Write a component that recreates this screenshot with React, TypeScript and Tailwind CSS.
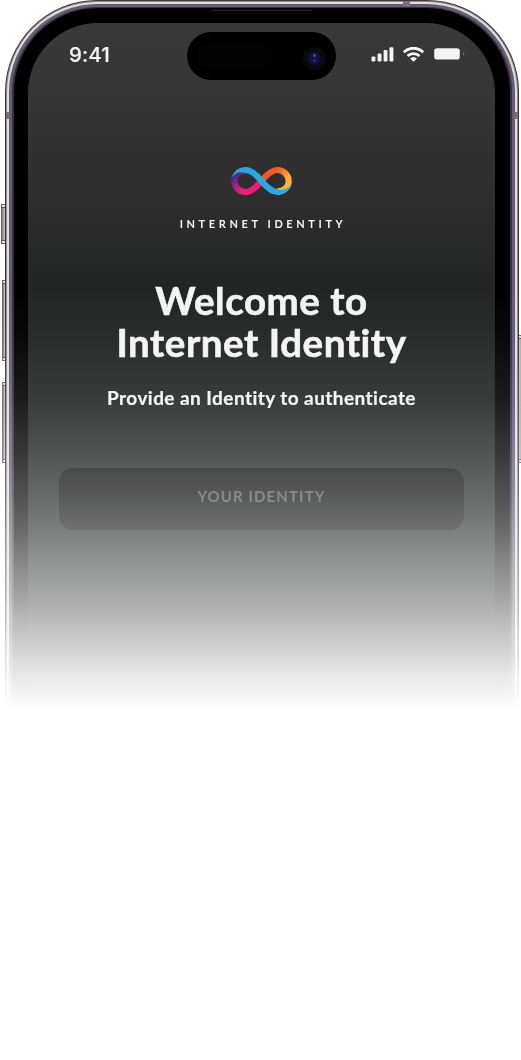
import React from "react";

function InfinityLogo() {
  return (
    <svg width="61" height="30" viewBox="0 0 61 30" fill="none" className="block">
      <defs>
        <linearGradient id="pink" x1="4" y1="6" x2="22" y2="26" gradientUnits="userSpaceOnUse">
          <stop offset="0.1" stopColor="#522785" />
          <stop offset="0.7" stopColor="#ed1e79" />
        </linearGradient>
        <linearGradient id="orange" x1="38" y1="4" x2="57" y2="22" gradientUnits="userSpaceOnUse">
          <stop offset="0.2" stopColor="#f15a24" />
          <stop offset="0.75" stopColor="#fbb03b" />
        </linearGradient>
      </defs>
      <path d="M30.5 15C26 20.5 21 26 14.8 26A11.4 11.2 0 0 1 3.3 14.8C3.3 8.5 8.5 4.6 14.8 4.6" stroke="url(#pink)" strokeWidth="6.2" />
      <path d="M30.5 15C35 9.5 40 4 46.2 4A11.4 11.2 0 0 1 57.7 15.2C57.7 21.5 52.5 25.4 46.2 25.4" stroke="url(#orange)" strokeWidth="6.2" />
      <path d="M14.5 4C21 4 26 9.5 30.5 15C35 20.5 40 26 46.5 26" stroke="#29abe2" strokeWidth="6.2" />
      <path d="M0.8 11.5C2.6 5 8 .9 14.8 .9L14.8 7.1C9.5 5 4.5 6.5 0.8 11.5Z" fill="#29abe2" />
      <path d="M60.2 18.5C58.4 25 53 29.1 46.2 29.1L46.2 22.9C51.5 25 56.5 23.5 60.2 18.5Z" fill="#29abe2" />
    </svg>
  );
}

function StatusIcons() {
  return (
    <svg width="94" height="16" viewBox="0 0 94 16" className="block" fill="#f4f4f4">
      <rect x="0.5" y="9.5" width="3.9" height="5" rx="1" />
      <rect x="6.6" y="6.5" width="3.9" height="8" rx="1" />
      <rect x="12.6" y="2.9" width="3.9" height="11.6" rx="1" />
      <rect x="18.5" y="0.3" width="3.9" height="14.2" rx="1" />
      <g fill="none" stroke="#f4f4f4" strokeWidth="2.9">
        <path d="M32.8 5.3A13.6 13.6 0 0 1 52.2 5.3" />
        <path d="M36.5 9A8.7 8.7 0 0 1 48.5 9" />
      </g>
      <path d="M39.1 11.6A5 5 0 0 1 45.9 11.6L42.5 14.7Z" />
      <rect x="63.2" y="1.2" width="25.6" height="11.3" rx="2.8" />
      <path d="M92.2 5C93.7 5.6 93.7 8.2 92.2 8.8Z" fill="#777" />
    </svg>
  );
}

function SideButton({ className }: { className: string }) {
  return (
    <div className={`absolute flex flex-col justify-between border border-[#67636a] bg-linear-to-r from-[#746e79] via-[#c0bac4] to-[#aaa3b0] ${className}`}>
      <div className="h-[3px] border-b border-[#5b5562] bg-[#e0dedf]" />
      <div className="h-[3px] border-t border-[#5b5562] bg-[#e0dedf]" />
    </div>
  );
}

function DynamicIsland() {
  return (
    <div className="absolute left-[187px] top-[32px] flex h-[48px] w-[149px] items-center justify-between rounded-full bg-black pl-[10px] pr-[10px]">
      <div className="h-[26px] w-[75px] rounded-full bg-[#030303]" />
      <div className="mt-[4px] flex h-[23px] w-[23px] items-center justify-center rounded-full bg-[#0a090d]">
        <div className="flex h-[13px] w-[13px] flex-col items-center justify-center gap-[2px] rounded-full bg-[#10123d]">
          <div className="h-[3px] w-[3px] rounded-full bg-[#424aa2]" />
          <div className="h-[3px] w-[3px] rounded-full bg-[#28309a]" />
        </div>
      </div>
    </div>
  );
}

export default function App() {
  return (
    <main className="h-[1060px] w-full overflow-hidden bg-white">
      <div className="relative h-[712px] w-[521px] overflow-hidden pl-[5px] pr-[2px] [mask-image:linear-gradient(to_bottom,#000_290px,rgba(0,0,0,.96)_340px,rgba(0,0,0,.89)_400px,rgba(0,0,0,.79)_450px,rgba(0,0,0,.67)_500px,rgba(0,0,0,.53)_550px,rgba(0,0,0,.385)_600px,rgba(0,0,0,.2)_650px,rgba(0,0,0,.09)_680px,transparent_711px)]">
        <SideButton className="left-[1px] top-[204px] h-[40px] w-[6px]" />
        <SideButton className="left-[2px] top-[280px] h-[81px] w-[5px]" />
        <SideButton className="left-[2px] top-[382px] h-[81px] w-[5px]" />
        <SideButton className="left-[517px] top-[335px] h-[128px] w-[5px]" />
        <div className="relative h-[760px] rounded-t-[92px] bg-[#3c393d] px-[1px] pt-[1px]">
          <div className="h-full rounded-t-[91px] bg-[#8f8a90] px-[1px] pt-[1px]">
            <div className="h-full rounded-t-[90px] bg-[#e2dedd] px-[2px] pt-[2px]">
              <div className="h-full rounded-t-[88px] bg-[#665b73] px-[3px] pt-[3px]">
                <div className="h-full rounded-t-[85px] bg-[#38323f] px-[2px] pt-[1px]">
                  <div className="h-full rounded-t-[84px] bg-[linear-gradient(to_bottom,#000_520px,#222_620px)] pl-[14px] pr-[15px] pt-[15px]">
                    <div className="flex h-full flex-col overflow-hidden rounded-t-[70px] bg-[linear-gradient(to_bottom,#393939_0px,#353535_80px,#2c2d2c_180px,#232424_265px,#212323_430px,#252525_700px)] text-[#f4f4f4]">
                      <header className="flex h-[64px] shrink-0 items-center justify-between pl-[41px] pr-[30px]">
                        <span className="text-[20.5px] font-medium leading-none tracking-[0.1px] [font-family:Inter,sans-serif] [-webkit-text-stroke:0.2px]">9:41</span>
                        <StatusIcons />
                      </header>
                      <section className="flex flex-col items-center text-center [font-family:Lato,sans-serif] [font-variant-ligatures:none]">
                        <div className="mt-[79px]">
                          <InfinityLogo />
                        </div>
                        <p className="mt-[20px] whitespace-nowrap pl-[3px] text-[11px] font-bold leading-[16px] tracking-[3.6px]">INTERNET IDENTITY</p>
                        <h1 className="mt-[47px] whitespace-nowrap text-[38.5px] font-bold leading-[42px] tracking-[0.55px] [-webkit-text-stroke:0.6px]">
                          Welcome to
                          <br />
                          Internet Identity
                        </h1>
                        <p className="mt-[23px] whitespace-nowrap text-[19px] font-bold leading-[24px] tracking-[0.44px] [-webkit-text-stroke:0.2px]">Provide an Identity to authenticate</p>
                        <div className="mt-[58px] flex h-[62px] w-[405px] items-center justify-center rounded-[14px] bg-black/65 pb-[5px] text-[15px] font-bold tracking-[1.1px] text-[#535353]">
                          YOUR IDENTITY
                        </div>
                      </section>
                    </div>
                  </div>
                </div>
              </div>
            </div>
          </div>
        </div>
        <div className="absolute left-[403px] top-[1px] h-[5px] w-[7px] bg-[#786e80]" />
        <div className="absolute left-[6px] top-[112px] h-[7px] w-[4px] bg-[#786e80]" />
        <div className="absolute left-[514px] top-[112px] h-[7px] w-[4px] bg-[#786e80]" />
        <div className="absolute left-[211px] top-[9px] h-[2px] w-[102px] rounded-b-[2px] border-b border-[#252525] bg-[#0b0b0b]" />
        <DynamicIsland />
      </div>
    </main>
  );
}
